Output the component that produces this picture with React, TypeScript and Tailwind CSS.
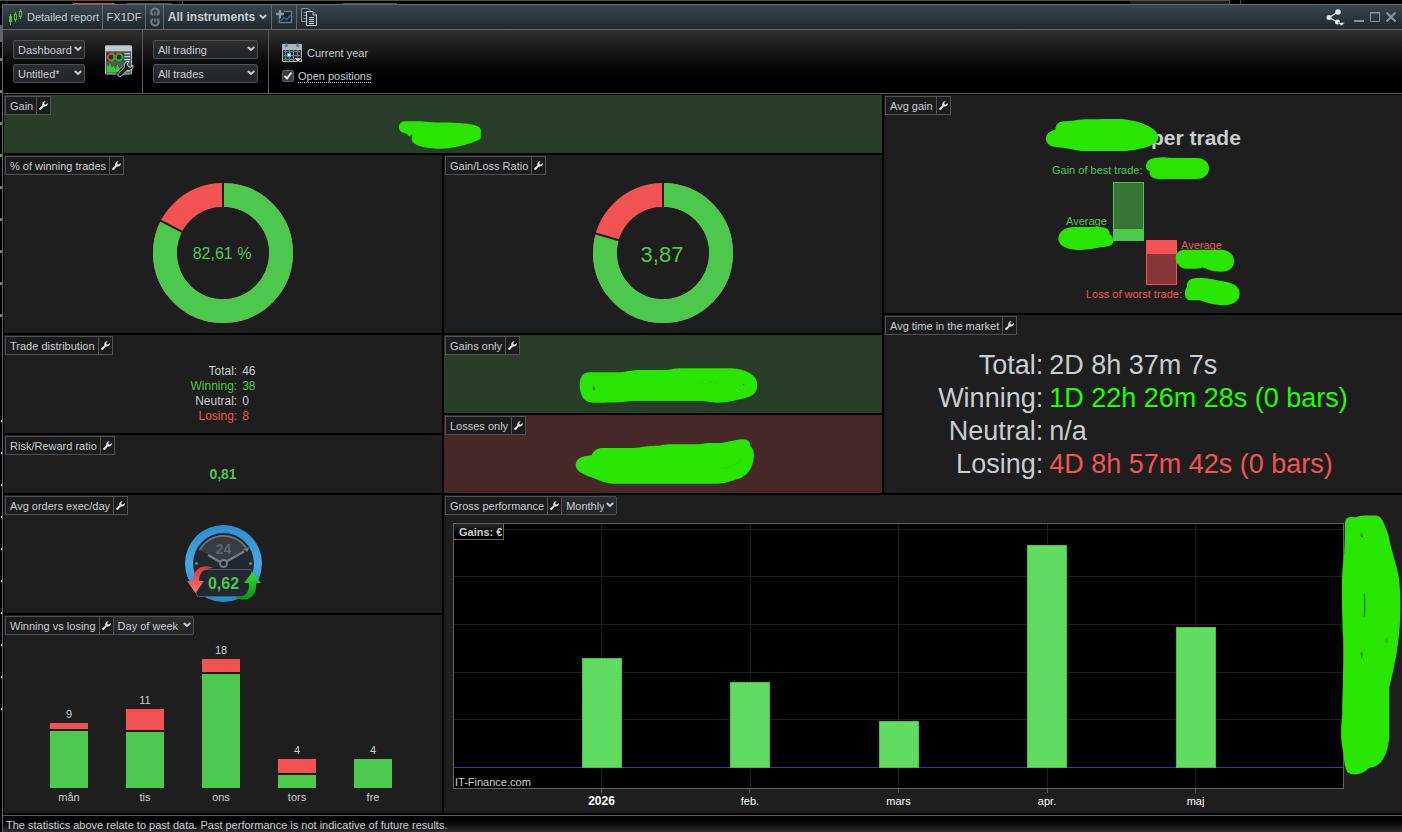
import React from 'react';

const GREEN = '#4cc84c';
const RED = '#f25252';
const MARKER = '#28e600';

interface PanelProps {
  title: string;
  className: string;
  dropdown?: string[];
  children?: React.ReactNode;
}

const Chevron: React.FC<{ className?: string }> = ({ className }) => (
  <svg className={className} width="8" height="6" viewBox="0 0 8 6" fill="none" stroke="#c8cdd2" strokeWidth="2">
    <path d="M0.8 1 L4 4 L7.2 1" />
  </svg>
);

const WrenchIcon = () => (
  <svg width="9" height="9" viewBox="0 0 9 9">
    <path
      d="M0.300 7.200 L3.300 4.400 C2.900 2.200 4 0.300 6.300 0 L6.600 0.300 L5.300 1.700 L5.500 3.200 L6.900 3.400 L8.500 2.300 L9 2.600 C8.800 4.800 7 6 4.800 5.600 L2 8.700 C0.900 9.500 -0.600 8.200 0.300 7.200 Z"
      fill="#dde1e4"
    />
  </svg>
);

const Select: React.FC<{ label: string; options: string[]; className: string }> = ({ label, options, className }) => (
  <span className={`relative flex items-center ${className}`}>
    <select
      aria-label={label}
      className="h-[19px] w-full appearance-none rounded-[2px] border border-[#4d4f51] bg-linear-to-b from-[#2c2e30] to-[#222324] pl-1 pr-3 pt-0.5 text-[11px] leading-none text-[#c8cdd2] outline-none"
    >
      {options.map(option => (
        <option key={option}>{option}</option>
      ))}
    </select>
    <Chevron className="pointer-events-none absolute right-[3px] top-[6px]" />
  </span>
);

const Panel: React.FC<PanelProps> = ({ title, className, dropdown, children }) => (
  <section className={`flex min-h-0 min-w-0 flex-col ${className}`}>
    <header className="flex h-5 shrink-0 pl-px pt-px">
      <h2 className="flex items-center border border-[#505254] bg-[#1c1c1c] pl-1 pr-[3px] pt-px text-[11px] leading-none">{title}</h2>
      <button
        aria-label={`Settings: ${title}`}
        className="flex w-[14px] items-center justify-center border-y border-r border-[#505254] bg-[#1c1c1c]"
      >
        <WrenchIcon />
      </button>
      {dropdown && (
        <Select label={title} options={dropdown} className={dropdown[0] === 'Monthly' ? '-ml-px w-14' : '-ml-px w-[81px]'} />
      )}
    </header>
    {children}
  </section>
);

// Marker strokes are traced on a 3x grid
const Scribble: React.FC<{ box: [number, number, number, number]; d: string; children?: React.ReactNode }> = ({ box, d, children }) => (
  <svg className="shrink-0" width={Math.round(box[2] / 3)} height={Math.round(box[3] / 3)} viewBox={box.join(' ')}>
    <path d={d} fill={MARKER} />
    {children}
  </svg>
);

const Donut: React.FC<{ share: number; label: string; large?: boolean }> = ({ share, label, large }) => {
  const angle = share * Math.PI * 2;
  const x = 70 + 72 * Math.sin(angle);
  const y = 70 - 72 * Math.cos(angle);
  const length = 2 * Math.PI * 58;
  return (
    <div className="flex flex-1 items-center justify-center pb-0.5">
      <svg width="140" height="140" viewBox="0 0 140 140">
        <circle cx="70" cy="70" r="58" fill="none" stroke={RED} strokeWidth="24" />
        <circle
          cx="70"
          cy="70"
          r="58"
          fill="none"
          stroke={GREEN}
          strokeWidth="24"
          strokeDasharray={`${length * share} ${length}`}
          transform="rotate(-90 70 70)"
        />
        <path d={`M70 0 V70 L${x} ${y}`} fill="none" stroke="#1e1e1e" strokeWidth="2" />
        <circle cx="70" cy="70" r="46" fill="#1e1e1e" />
        <text x="69" y={large ? 79 : 76} textAnchor="middle" fill={GREEN} className={large ? 'text-[22px]' : 'text-base'}>
          {label}
        </text>
      </svg>
    </div>
  );
};

const distribution = [
  { label: 'Total:', value: '46', color: 'text-[#c8cdd2]' },
  { label: 'Winning:', value: '38', color: 'text-[#4cc84c]' },
  { label: 'Neutral:', value: '0', color: 'text-[#c8cdd2]' },
  { label: 'Losing:', value: '8', color: 'text-[#f25252]' },
];

const marketTime = [
  { label: 'Total:', value: '2D 8h 37m 7s', color: 'text-[#c8cdd2]' },
  { label: 'Winning:', value: '1D 22h 26m 28s (0 bars)', color: 'text-[#1eff00]' },
  { label: 'Neutral:', value: 'n/a', color: 'text-[#c8cdd2]' },
  { label: 'Losing:', value: '4D 8h 57m 42s (0 bars)', color: 'text-[#f25252]' },
];

const weekdays = [
  { day: 'mån', total: 9, lost: 6, won: 57 },
  { day: 'tis', total: 11, lost: 21, won: 56 },
  { day: 'ons', total: 18, lost: 13, won: 114 },
  { day: 'tors', total: 4, lost: 14, won: 13 },
  { day: 'fre', total: 4, lost: 0, won: 29 },
];

const months = [
  { label: '2026', line: 147, bar: 128, height: 110 },
  { label: 'feb.', line: 296, bar: 276, height: 86 },
  { label: 'mars', line: 444, bar: 425, height: 47 },
  { label: 'apr.', line: 593, bar: 573, height: 223 },
  { label: 'maj', line: 741, bar: 722, height: 141 },
];

const TitleBar = () => (
  <header className="flex h-[26px] shrink-0 items-stretch border-y border-[#63696e] bg-linear-to-b from-[#3c444c] to-[#21292f]">
    <div className="flex w-[100px] items-center gap-1 border-r border-[#63696e] pl-1.5">
      <svg width="14" height="16" viewBox="0 0 14 16" stroke="#58b944" fill="none">
        <path d="M1.500 5 V16 M6.500 3 V13 M11.500 0 V10" />
        <rect x="0.500" y="7.500" width="2" height="5" fill="#58b944" />
        <rect x="5.500" y="5.500" width="2" height="5" fill="#29323a" />
        <rect x="10.500" y="2.500" width="2" height="5" fill="#29323a" />
      </svg>
      <span className="whitespace-nowrap text-[11px]">Detailed report</span>
    </div>
    <div className="flex w-[43px] items-center justify-center border-r border-[#63696e] text-[11px]">FX1DF</div>
    <button aria-label="Link" className="flex w-[18px] items-center justify-center border-r border-[#63696e]">
      <svg width="10" height="20" viewBox="0 0 10 20" fill="none" stroke="#767a7d" strokeWidth="2">
        <path d="M3 8 C0 6.500 1 1.500 5 1.500 S10 6.500 7 8 M3 12 C0 13.500 1 18.500 5 18.500 S10 13.500 7 12" />
        <path d="M5 4.500 V8.500 M5 11.500 V15.500" strokeWidth="1.500" />
      </svg>
    </button>
    <button className="flex w-[108px] items-center justify-center gap-1 border-r border-[#63696e] text-xs font-bold">
      All instruments
      <Chevron />
    </button>
    <button aria-label="Add chart" className="flex w-[25px] items-center justify-center border-r border-[#63696e]">
      <svg width="17" height="14" viewBox="0 0 17 14" fill="none">
        <path d="M8 1.500 H15.500 V12.500 H3.500 V8" stroke="#6c757c" strokeWidth="1.400" fill="#1d252b" />
        <path d="M5 11 L8 7.500 L11 9.500 L15 4.500" stroke="#2d6f93" strokeWidth="1.400" />
        <path d="M4 0 V8 M0 4 H8" stroke="#8d9499" strokeWidth="2.400" />
      </svg>
    </button>
    <button aria-label="Copy" className="flex w-6 items-center justify-center">
      <svg width="17" height="18" viewBox="0 0 17 18" fill="#2b333a">
        <path d="M0.500 0.500 H7 L10.500 4 V13.500 H0.500 Z" stroke="#8a9197" />
        <path d="M2.500 4.500 H6 M2.500 7.500 H6 M2.500 10.500 H5" stroke="#8a9197" />
        <path d="M5.500 3.500 H12 L15.500 7 V17.500 H5.500 Z" stroke="#c8cdd2" />
        <path d="M12 3.500 V7 H15.500 M8 9.500 H13 M8 11.500 H13 M8 13.500 H13 M8 15.500 H13" stroke="#c8cdd2" />
      </svg>
    </button>
    <div className="ml-auto flex items-center gap-1.5 pr-1.5">
      <button aria-label="Share" className="mr-0.5">
        <svg width="20" height="17" viewBox="0 0 20 17" fill="#e4e4e4" stroke="#e4e4e4">
          <path d="M3 8.500 L12 3 M3 8.500 L13 14" strokeWidth="1.300" fill="none" />
          <circle cx="3" cy="8.500" r="2.500" stroke="none" />
          <circle cx="12" cy="3" r="2.800" stroke="none" />
          <circle cx="11.500" cy="13" r="2.500" stroke="none" />
          <path d="M12 13.500 H19 L15.500 17 Z" stroke="#29323a" strokeWidth="0.500" />
        </svg>
      </button>
      <button aria-label="Minimize">
        <svg width="10" height="10" viewBox="0 0 10 10" stroke="#89919a" strokeWidth="2"><path d="M0 9 H10" /></svg>
      </button>
      <button aria-label="Maximize">
        <svg width="10" height="10" viewBox="0 0 10 10" stroke="#89919a" fill="none">
          <path d="M0.500 9.500 V1 H9.500 V9.500 Z M0 0.500 H10" />
        </svg>
      </button>
      <button aria-label="Close">
        <svg width="10" height="10" viewBox="0 0 10 10" stroke="#89919a" strokeWidth="2"><path d="M0.500 0.500 L9.500 9.500 M9.500 0.500 L0.500 9.500" /></svg>
      </button>
    </div>
  </header>
);

const Toolbar = () => (
  <div className="flex h-16 shrink-0 items-stretch border-b border-[#5a5a5a] bg-linear-to-b from-[#303030] to-black">
    <div className="flex gap-5 border-r border-[#5a5a5a] pl-2.5 pr-2">
      <div className="flex flex-col gap-[5px] pt-2.5">
        <Select label="View" options={['Dashboard']} className="w-[72px]" />
        <Select label="Template" options={['Untitled*']} className="w-[72px]" />
      </div>
      <button aria-label="Configure dashboard" className="flex w-[29px] items-start pt-[15px]">
        <svg width="30" height="33" viewBox="0 0 30 33">
          <rect x="0.500" y="0.500" width="27" height="29" rx="1" fill="#4f565c" stroke="#c3c8cc" />
          <rect x="0" y="0" width="28" height="6" rx="1" fill="#c3c8cc" />
          <rect x="2" y="8" width="17" height="8" fill="#2a2f33" />
          <g fill="none" strokeWidth="2">
            <circle cx="6.500" cy="12" r="3.500" stroke="#e83b3b" />
            <path d="M6.500 8.500 A3.500 3.500 0 0 1 6.500 15.500" stroke="#18c218" />
            <circle cx="14.500" cy="12" r="3.500" stroke="#18c218" />
            <path d="M14.500 8.500 A3.500 3.500 0 0 0 11 12" stroke="#e83b3b" />
          </g>
          <path d="M20 8.500 H26 M20 11.500 H26 M20 14.500 H26" stroke="#e8ebee" />
          <path d="M2 28 V19 L4 22 L5 17 L7 23 L9 21 L11 25 L13 19 L15 24 L18 21 L26 24 V28 Z" fill="#2fd02f" />
          <path d="M15 29.500 L22 22.500" stroke="#000" strokeWidth="6" strokeLinecap="round" />
          <path
            d="M13.500 29 L20 22.500 C19 19 21.500 16 25 16.500 L23 19 L24 21.500 L26.500 22.500 L29 20.500 C29.500 24 26.500 26.500 23 25.500 L16.500 32 C14.500 33 12.500 31 13.500 29 Z"
            fill="#1d2023"
            stroke="#d8dcdf"
          />
        </svg>
      </button>
    </div>
    <div className="flex flex-col gap-[5px] border-r border-[#5a5a5a] px-2.5 pt-2.5">
      <Select label="Trading type" options={['All trading']} className="w-[105px]" />
      <Select label="Trades" options={['All trades']} className="w-[105px]" />
    </div>
    <div className="flex flex-col gap-1.5 pl-[13px] pt-[13px]">
      <button className="flex items-center gap-[5px] text-[11px] leading-none">
        <svg width="20" height="20" viewBox="0 0 20 20">
          <rect x="0" y="1" width="20" height="18" rx="1" fill="#a9b7c1" />
          <rect x="1" y="7" width="18" height="11" fill="#2c3337" />
          <path d="M4.500 0 V4 M15.500 0 V4" stroke="#5b6a75" strokeWidth="2" />
          <path d="M2 8.500 H18 M2 12.500 H18 M2 16.500 H14 M3.500 7 V18 M7.500 7 V18 M11.500 7 V18 M15.500 7 V14" stroke="#767e83" />
          <rect x="5.500" y="10.500" width="3" height="3" fill="#d9f2ff" stroke="#37b6f0" />
          <path d="M12 15 H20 L16 19 Z" fill="#e6e6e6" stroke="#111" strokeWidth="0.500" />
        </svg>
        Current year
      </button>
      <label className="flex items-center gap-1 text-[11px] leading-none">
        <span className="relative flex size-3">
          <input type="checkbox" defaultChecked className="peer size-3 appearance-none rounded-[2px] border border-[#5c5e60] bg-[#3a3c3e]" />
          <svg className="pointer-events-none absolute inset-0 hidden peer-checked:block" width="12" height="12" viewBox="0 0 12 12">
            <path d="M2.500 6 L5 8.500 L9.500 2.500" fill="none" stroke="#e4e4e4" strokeWidth="2" />
          </svg>
        </span>
        <span className="border-b border-dotted border-[#c8cdd2] pt-0.5">Open positions</span>
      </label>
    </div>
  </div>
);

const AverageGain = () => (
  <div className="flex flex-1 justify-center">
    <svg width="286" height="198" viewBox="0 0 286 198" className="text-[11px]">
      <text x="151" y="30" fill="#c8cdd2" className="text-[21px] font-bold">per trade</text>
      <text x="52" y="59" fill={GREEN}>Gain of best trade:</text>
      <rect x="113.500" y="67.500" width="30" height="58" fill="#367535" stroke={GREEN} />
      <rect x="113" y="114" width="31" height="12" fill={GREEN} />
      <text x="66" y="110" fill={GREEN}>Average</text>
      <rect x="146.500" y="125.500" width="30" height="44" fill="#893638" stroke={RED} />
      <rect x="146" y="125" width="31" height="14" fill={RED} />
      <text x="181" y="134" fill={RED}>Average</text>
      <text x="86" y="183" fill={RED}>Loss of worst trade:</text>
      <g transform="translate(0 -25) scale(0.33333)" fill={MARKER}>
        <path d="M138 145 C139 129 152 122 166 119 C167 101 177 94 198 94 C225 92 240 87 275 88 C315 88 355 86 382 89 C425 95 475 115 475 143 C473 166 425 178 378 183 H245 C220 180 195 172 168 171 C148 170 138 160 138 145 Z" />
        <path d="M438 230 C438 214 450 205 465 204 L490 202 L515 204 H590 C615 205 627 218 627 235 C627 254 612 267 590 267 H478 C460 267 447 260 449 243 C441 240 438 236 438 230 Z" />
        <path d="M175 447 C175 425 195 411 225 411 H300 C320 411 330 420 329 433 C337 437 340 446 340 454 C338 467 325 471 302 472 C270 479 235 483 207 476 C186 471 176 460 175 447 Z" />
        <path d="M527 505 C528 486 540 478 560 479 H660 C688 479 702 494 702 514 C702 535 686 545 665 545 C635 546 620 537 608 532 C600 537 580 537 555 536 C540 534 528 520 527 505 Z" />
        <path d="M555 608 C554 598 562 594 561 586 C561 569 575 564 600 564 C630 564 645 570 668 574 C700 578 720 590 719 612 C718 633 700 645 670 646 C635 646 615 634 597 631 H570 C558 628 554 620 555 608 Z" />
      </g>
    </svg>
  </div>
);

const OrdersClock = () => (
  <div className="flex flex-1 items-center justify-center pb-0.5">
    <svg width="77" height="77" viewBox="0 0 77 77">
      <defs>
        <linearGradient id="ring" x1="0" y1="0" x2="0" y2="1">
          <stop offset="0" stopColor="#2c8ccd" />
          <stop offset="0.5" stopColor="#48a8e2" />
          <stop offset="1" stopColor="#2389cf" />
        </linearGradient>
        <linearGradient id="down" x1="0" y1="0" x2="0" y2="1">
          <stop offset="0" stopColor="#d93434" />
          <stop offset="1" stopColor="#ff7474" />
        </linearGradient>
        <linearGradient id="up" x1="0" y1="0" x2="0" y2="1">
          <stop offset="0" stopColor="#35dc35" />
          <stop offset="1" stopColor="#079b07" />
        </linearGradient>
      </defs>
      <circle cx="38.500" cy="38.500" r="38.500" fill="url(#ring)" />
      <circle cx="38.500" cy="38.500" r="30.500" fill="#222830" />
      <path d="M38.500 38.500 L15 25 A27 27 0 0 1 62 25 Z" fill="#363c44" />
      <path d="M14.500 25 A27.500 27.500 0 0 1 61 22.500" fill="none" stroke="#6e757b" strokeWidth="1.600" />
      <path d="M64 22 L62.500 27 L58 24 Z" fill="#6e757b" />
      <text x="38.500" y="29" textAnchor="middle" fill="#5d646b" className="text-sm font-bold">24</text>
      <path d="M23 30 L38 38.500 L59 26.500" fill="none" stroke="#747b81" strokeWidth="2.500" />
      <circle cx="38.500" cy="38.500" r="3.500" fill="#222830" stroke="#747b81" strokeWidth="2" />
      <circle cx="11.500" cy="38.500" r="1.500" fill="#747b81" />
      <circle cx="65.500" cy="38.500" r="1.500" fill="#747b81" />
      <rect x="11.500" y="44.500" width="55" height="27" rx="2" fill="#222830" stroke="#555b61" />
      <path d="M28 43 C21 39 8 41 8 56 H2 L10.500 68 L19 56 H14 C14 48 19 43 28 43 Z" fill="url(#down)" />
      <path d="M50 72 C57 77 72 76 71 58 H76 L67.500 47 L59 58 H64 C65 67 60 73 50 72 Z" fill="url(#up)" />
      <text x="38.500" y="64" textAnchor="middle" fill={GREEN} className="text-base font-bold">0,62</text>
    </svg>
  </div>
);

const WeekdayChart = () => (
  <div className="flex flex-1 items-end pb-2 pl-[27px] pr-[31px]">
    {weekdays.map(({ day, total, lost, won }) => (
      <div key={day} className="flex flex-1 flex-col items-center text-[11px] leading-4">
        <span className="pb-px">{total}</span>
        {lost > 0 && <div className="mb-0.5 w-[38px] bg-[#f25252]" style={{ height: lost }} />}
        <div className="w-[38px] bg-[#4cc84c]" style={{ height: won }} />
        <span className="pt-px">{day}</span>
      </div>
    ))}
  </div>
);

const PerformanceChart = () => (
  <div className="flex min-h-0 flex-1 pl-[9px] pt-2">
    <div className="flex min-w-0 flex-1 flex-col">
      <div className="relative min-h-0 flex-1 border border-[#606060] bg-black">
        <svg className="absolute inset-0 size-full" viewBox="0 0 889 264" preserveAspectRatio="none">
          <g fill="#1f1f1f">
            {[5, 52, 100, 148, 195].map(y => (
              <rect key={y} x="0" y={y} width="889" height="1" />
            ))}
            {months.map(({ label, line }) => (
              <rect key={label} x={line} y="0" width="1" height="264" />
            ))}
          </g>
          <rect x="0" y="243" width="889" height="1" fill="#3434c0" />
          {months.map(({ label, bar, height }) => (
            <rect key={label} x={bar + 0.5} y={244.5 - height} width="39" height={height - 1} fill="#60dd60" stroke="#43c443" />
          ))}
        </svg>
        <span className="absolute left-0 top-0 flex h-4 items-center border-b border-r border-[#606060] bg-linear-to-b from-[#2c2c2c] to-black pl-[5px] pr-px pt-0.5 text-[11px] font-bold leading-none">
          Gains: €
        </span>
        <span className="absolute bottom-0 left-px text-[11px] leading-3">IT-Finance.com</span>
      </div>
      <div className="flex h-6 shrink-0 px-[8.33%] text-[11px] leading-4 text-white">
        {months.map(({ label }, index) => (
          <div key={label} className="flex flex-1 flex-col items-center">
            <span className="h-1 w-px bg-[#606060]" />
            <span className={index === 0 ? 'text-xs font-bold' : ''}>{label}</span>
          </div>
        ))}
      </div>
    </div>
    <div className="relative w-[58px] shrink-0">
      <div className="absolute -left-[3px] -top-2">
        <Scribble
          box={[123, 44, 180, 779]}
          d="M135 65 C138 53 145 49 160 50 C175 50 180 44 205 45 H230 C248 47 255 80 265 102 C272 140 280 165 290 200 C298 230 301 265 301 300 C303 400 290 470 268 560 V710 C262 770 240 800 208 802 C190 820 170 825 150 820 C133 812 133 780 130 755 C120 720 123 670 127 640 C125 600 130 560 129 520 C133 470 131 420 128 390 C126 320 124 250 128 200 C134 160 135 120 135 65 Z"
        >
          <path d="M193 280 C195 290 196 320 193 349 Z M184 98 L188 110 L184 108 Z M259 413 L261 415 L260 427 Z M184 456 L186 457 L185 474 Z" fill="#174d10" stroke="#174d10" />
        </Scribble>
      </div>
    </div>
  </div>
);

const App: React.FC = () => {
  return (
    <div className="flex min-h-screen flex-col overflow-hidden bg-black font-['Liberation_Sans',Arial,sans-serif] text-[#c8cdd2]">
      {/* Edge of the window behind */}
      <svg className="h-1 w-full shrink-0" viewBox="0 0 1402 4" preserveAspectRatio="none">
        <path d="M0 0.500 H1230 M126 3.500 H172 M342 3.500 H397 M1229.500 0 V4 M1240.500 0 V4 M182.500 0 V4" stroke="#505050" />
        <rect x="1130" y="1" width="99" height="3" fill="#1e1f1e" />
        <path d="M73 3.500 H115" stroke="#e04848" />
      </svg>
      <div className="flex flex-1">
        <svg className="w-0.5 shrink-0" viewBox="0 0 2 828" preserveAspectRatio="none">
          <rect x="0" y="21" width="2" height="17" fill="#666670" />
          {[54, 86, 118, 150, 182, 214, 246, 278, 310].map(y => (
            <rect key={y} x="0" y={y} width="2" height="3" fill="#3fae3f" />
          ))}
          {[416, 448, 480, 512, 544, 576, 608, 640, 672, 704].map(y => (
            <rect key={y} x="1" y={y} width="1" height="2" fill="#e8e8e8" />
          ))}
        </svg>
        <main className="flex min-w-0 flex-1 flex-col border-l border-[#606468]">
          <TitleBar />
          <Toolbar />
          <div className="grid flex-1 grid-cols-[438fr_438fr_518fr] grid-rows-[repeat(36,minmax(18px,1fr))] gap-0.5 py-px pl-px">
            <Panel title="Gain" className="col-span-2 col-start-1 row-span-3 row-start-1 bg-[#283e28]">
              <div className="flex flex-1 items-center justify-center pr-1.5 pt-0.5">
                <Scribble
                  box={[57, 94, 246, 84]}
                  d="M57 113 C57 98 68 94 82 95 H125 C150 99 180 99 225 99 C260 101 300 104 303 120 L302 147 C285 158 230 177 172 177 C130 176 95 165 95 148 C97 140 98 136 96 134 L88 141 L80 132 C64 130 57 124 57 113 Z"
                />
              </div>
            </Panel>
            <Panel title="% of winning trades" className="col-start-1 row-span-9 row-start-4 bg-[#1e1e1e]">
              <Donut share={0.8261} label="82,61 %" />
            </Panel>
            <Panel title="Gain/Loss Ratio" className="col-start-2 row-span-9 row-start-4 bg-[#1e1e1e]">
              <Donut share={0.7947} label="3,87" large />
            </Panel>
            <Panel title="Trade distribution" className="col-start-1 row-span-5 row-start-13 bg-[#1e1e1e]">
              <div className="flex flex-1 items-center justify-center">
                <table className="text-xs leading-[15px]">
                  <tbody>
                    {distribution.map(({ label, value, color }) => (
                      <tr key={label} className={color}>
                        <th className="pr-[5px] text-right font-normal">{label}</th>
                        <td>{value}</td>
                      </tr>
                    ))}
                  </tbody>
                </table>
              </div>
            </Panel>
            <Panel title="Risk/Reward ratio" className="col-start-1 row-span-3 row-start-18 bg-[#1e1e1e]">
              <div className="flex flex-1 items-center justify-center text-sm font-bold leading-4 text-[#4cc84c]">0,81</div>
            </Panel>
            <Panel title="Gains only" className="col-start-2 row-span-4 row-start-13 bg-[#283e28]">
              <div className="flex flex-1 items-center justify-center pl-2.5 pt-0.5">
                <Scribble
                  box={[416, 114, 538, 106]}
                  d="M416 168 C416 140 425 127 450 127 H540 C560 125 570 121 590 120 H680 C695 119 700 116 715 115 H875 C920 118 954 135 954 165 C954 190 940 202 905 208 C880 214 860 219 835 219 C810 218 800 214 780 214 H570 C540 219 500 219 455 219 C428 217 418 200 416 168 Z"
                >
                  <path d="M457 167 L459 174 H462 L461 180 H456 Z M909 162 L915 163 L913 167 Z" fill="#1f5c14" />
                  <path d="M785 157 H792 M810 155 H816 M826 155 H832" stroke="#1f8c14" />
                </Scribble>
              </div>
            </Panel>
            <Panel title="Losses only" className="col-start-2 row-span-4 row-start-17 bg-[#472828]">
              <div className="flex flex-1 items-center justify-center pb-1.5 pl-1">
                <Scribble
                  box={[406, 325, 540, 136]}
                  d="M406 403 C407 385 420 377 454 374 C460 362 468 353 485 352 H580 C610 350 615 346 640 346 C665 346 670 341 695 341 H775 C790 340 795 337 815 337 H845 C870 334 885 328 910 326 C930 326 933 335 934 347 C945 355 946 372 944 385 C940 415 925 435 902 444 C875 450 865 460 820 460 H515 C490 458 470 446 450 440 C425 430 407 422 406 403 Z"
                >
                  <path d="M852 415 L870 410 M876 407 L892 401 L904 387" fill="none" stroke="#3f8a20" strokeWidth="1" />
                </Scribble>
              </div>
            </Panel>
            <Panel title="Avg gain" className="col-start-3 row-span-11 row-start-1 bg-[#1e1e1e]">
              <AverageGain />
            </Panel>
            <Panel title="Avg time in the market" className="col-start-3 row-span-9 row-start-12 bg-[#1e1e1e]">
              <div className="flex flex-1 items-center justify-center pt-0.5">
                <table className="text-[27px] leading-[33px]">
                  <tbody>
                    {marketTime.map(({ label, value, color }) => (
                      <tr key={label}>
                        <th className="pr-1.5 text-right font-normal">{label}</th>
                        <td className={color}>{value}</td>
                      </tr>
                    ))}
                  </tbody>
                </table>
              </div>
            </Panel>
            <Panel title="Avg orders exec/day" className="col-start-1 row-span-6 row-start-21 bg-[#1e1e1e]">
              <OrdersClock />
            </Panel>
            <Panel title="Winning vs losing" dropdown={['Day of week']} className="col-start-1 row-span-10 row-start-27 bg-[#1e1e1e]">
              <WeekdayChart />
            </Panel>
            <Panel
              title="Gross performance"
              dropdown={['Monthly']}
              className="col-span-2 col-start-2 row-span-16 row-start-21 bg-[#1e1e1e]"
            >
              <PerformanceChart />
            </Panel>
          </div>
          <footer className="mt-px h-[17px] shrink-0 border-t border-[#5a5a5a] bg-linear-to-b from-black to-[#303030] pl-[3px] pt-0.5 text-[11px] leading-[14px]">
            The statistics above relate to past data. Past performance is not indicative of future results.
          </footer>
        </main>
      </div>
    </div>
  );
};

export default App;
